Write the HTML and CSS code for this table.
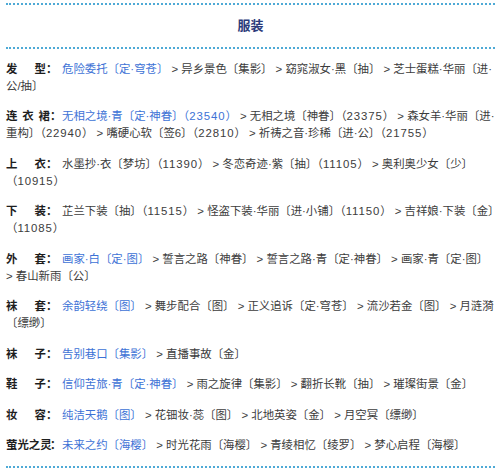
FILE: index.html
```html
<!DOCTYPE html>
<html lang="zh">
<head>
<meta charset="utf-8">
<link rel="stylesheet" href="styles.css">
</head>
<body>
<div class="box">
  <h2 class="title">服装</h2>
  <div class="list">
    <p class="row"><span class="lab"><span class="nm">发型</span>：</span>&#8288;<span class="hl">危险委托〔定·穹苍〕</span> &gt; 异乡景色〔集影〕 &gt; 窈窕淑女·黑〔抽〕 &gt; 芝士蛋糕·华丽〔进·公/抽〕</p>
    <p class="row"><span class="lab"><span class="nm three">连衣裙</span>：</span>&#8288;<span class="hl">无相之境·青〔定·神眷〕（<span class="num">23540</span>）</span> &gt; 无相之境〔神眷〕（<span class="num">23375</span>） &gt; 森女羊·华丽〔进·重构〕（<span class="num">22940</span>） &gt; 嘴硬心软〔签6〕（<span class="num">22810</span>） &gt; 祈祷之音·珍稀〔进·公〕（<span class="num">21755</span>）</p>
    <p class="row"><span class="lab"><span class="nm">上衣</span>：</span>&#8288;水墨抄·衣〔梦坊〕（<span class="num">11390</span>） &gt; 冬恋奇迹·紫〔抽〕（<span class="num">11105</span>） &gt; 奥利奥少女〔少〕（<span class="num">10915</span>）</p>
    <p class="row"><span class="lab"><span class="nm">下装</span>：</span>&#8288;芷兰下装〔抽〕（<span class="num">11515</span>） &gt; 怪盗下装·华丽〔进·小铺〕（<span class="num">11150</span>） &gt; 吉祥娘·下装〔金〕（<span class="num">11085</span>）</p>
    <p class="row"><span class="lab"><span class="nm">外套</span>：</span>&#8288;<span class="hl">画家·白〔定·图〕</span> &gt; 誓言之路〔神眷〕 &gt; 誓言之路·青〔定·神眷〕 &gt; 画家·青〔定·图〕 &gt; 春山新雨〔公〕</p>
    <p class="row"><span class="lab"><span class="nm">袜套</span>：</span>&#8288;<span class="hl">余韵轻绕〔图〕</span> &gt; 舞步配合〔图〕 &gt; 正义追诉〔定·穹苍〕 &gt; 流沙若金〔图〕 &gt; 月涟漪〔缥缈〕</p>
    <p class="row"><span class="lab"><span class="nm">袜子</span>：</span>&#8288;<span class="hl">告别巷口〔集影〕</span> &gt; 直播事故〔金〕</p>
    <p class="row"><span class="lab"><span class="nm">鞋子</span>：</span>&#8288;<span class="hl">信仰苦旅·青〔定·神眷〕</span> &gt; 雨之旋律〔集影〕 &gt; 翻折长靴〔抽〕 &gt; 璀璨街景〔金〕</p>
    <p class="row"><span class="lab"><span class="nm">妆容</span>：</span>&#8288;<span class="hl">纯洁天鹅〔图〕</span> &gt; 花钿妆·蕊〔图〕 &gt; 北地英姿〔金〕 &gt; 月空冥〔缥缈〕</p>
    <p class="row"><span class="lab"><span class="nm three">萤光之灵</span>：</span>&#8288;<span class="hl">未来之约〔海樱〕</span> &gt; 时光花雨〔海樱〕 &gt; 青绫相忆〔绫罗〕 &gt; 梦心启程〔海樱〕</p>
  </div>
</div>
</body>
</html>
```

FILE: styles.css
```css
html, body {
  margin: 0;
  padding: 0;
  background: #ffffff;
}
body {
  font-family: "Liberation Sans", "Noto Sans CJK SC", sans-serif;
  font-size: 11.4px;
  color: #3c3c3c;
}
.box {
  margin: 0 5px 0 6px;
  padding-top: 3px;
}
.title {
  margin: 0;
  border-top: 2px dotted #4eaad6;
  border-bottom: 2px dotted #4eaad6;
  text-align: center;
  font-size: 13px;
  font-weight: bold;
  color: #2b3a7a;
  line-height: 42px;
  height: 42px;
}
.list {
  padding-top: 11.5px;
  padding-bottom: 12px;
  border-bottom: 2px dotted #4eaad6;
}
.row {
  margin: 0 0 13.5px 0;
  line-height: 17px;
}
.row:last-child {
  margin-bottom: 0;
}
.lab {
  display: inline-block;
  width: 56px;
  font-weight: bold;
  color: #1e1e1e;
  white-space: nowrap;
}
.nm {
  display: inline-block;
  width: 40px;
  text-align: justify;
  text-align-last: justify;
}
.nm.three {
  width: 44px;
}
.num {
  letter-spacing: 0.9px;
}
.hl {
  color: #3d72d6;
}
```
